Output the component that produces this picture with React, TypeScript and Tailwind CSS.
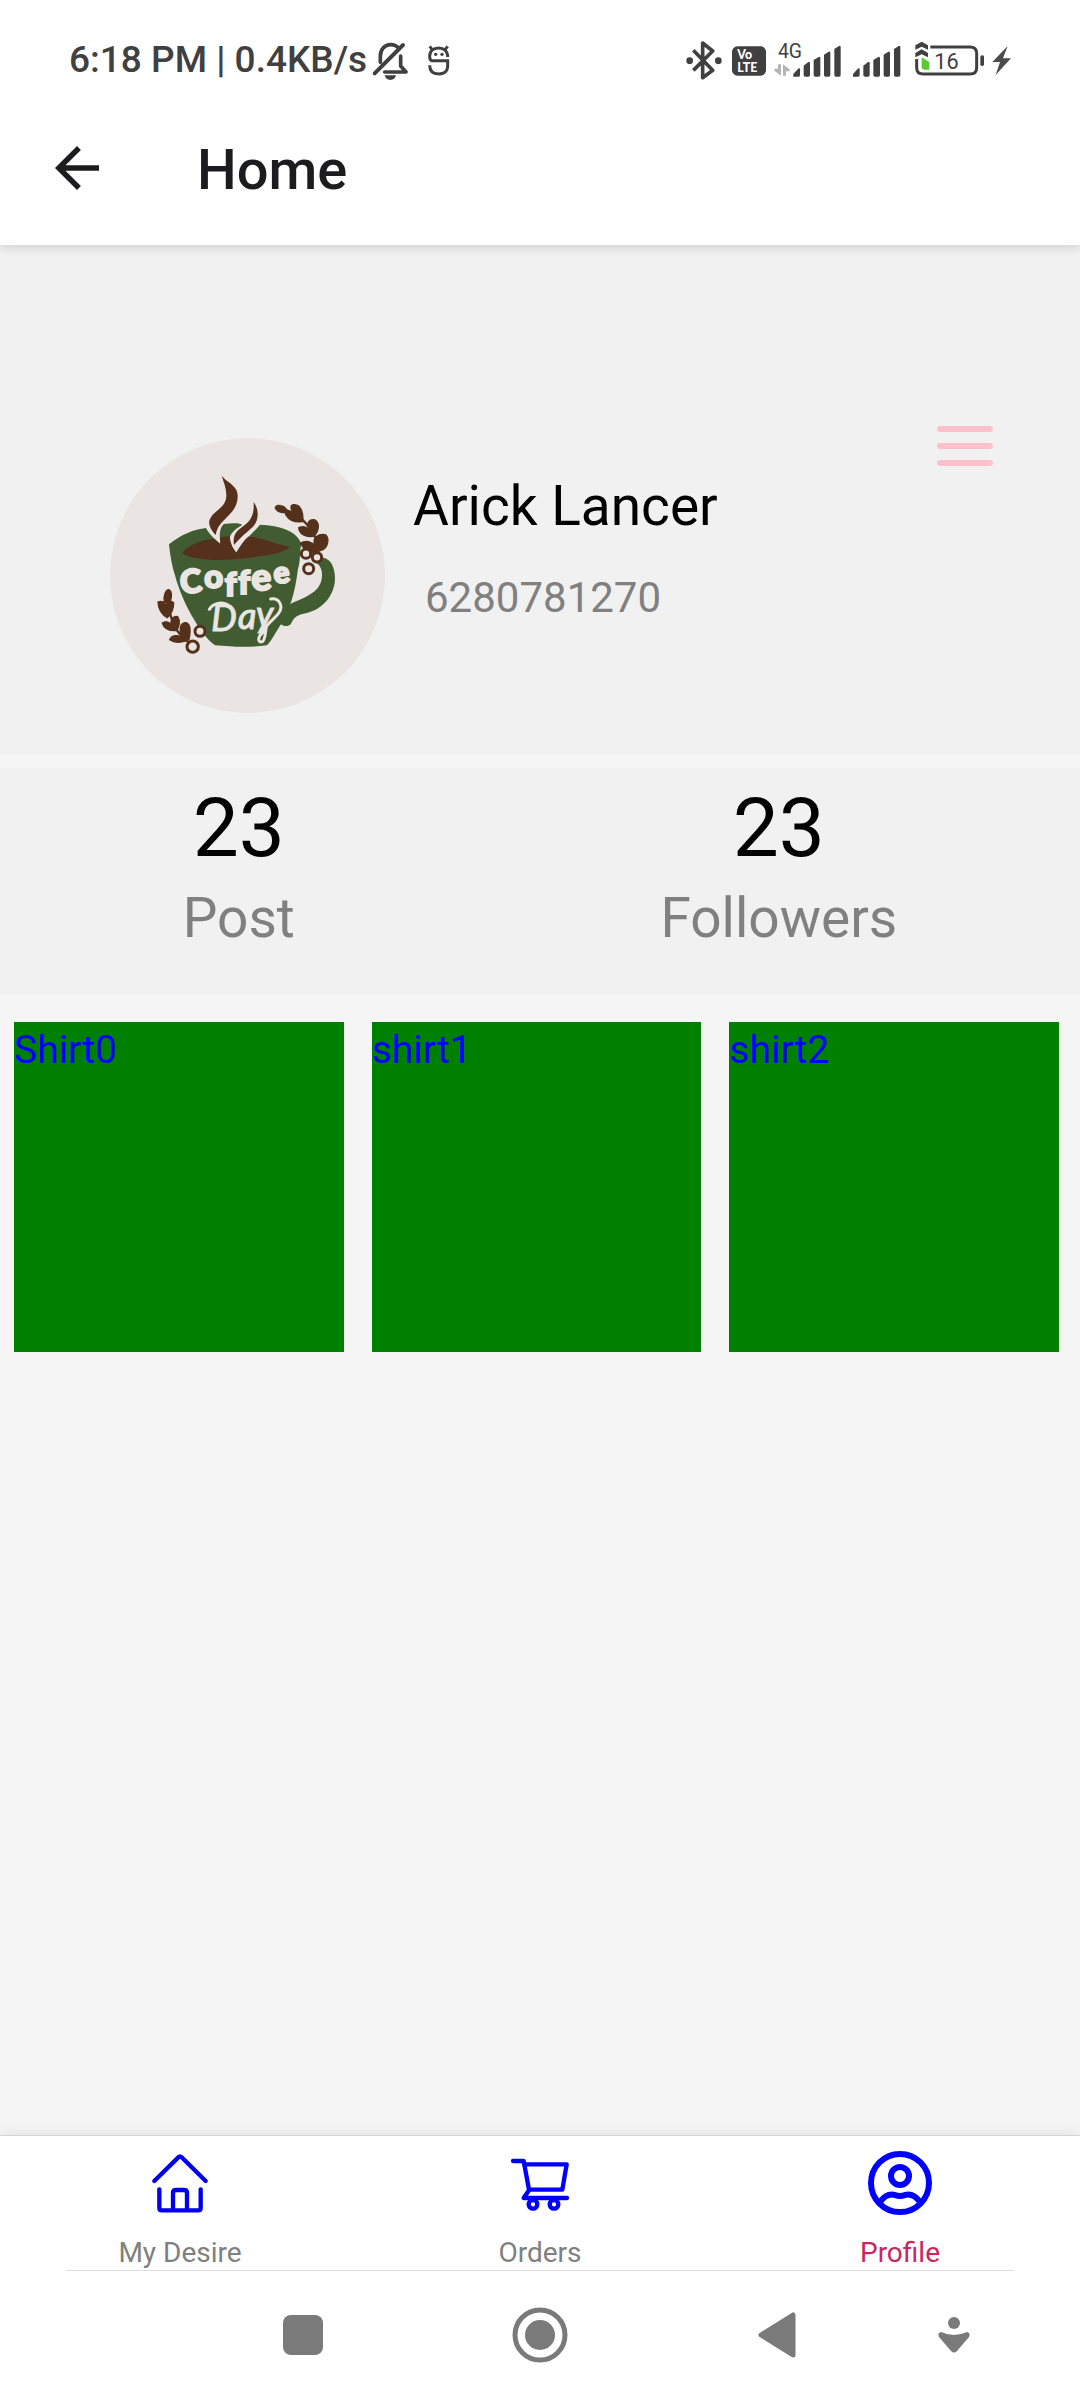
import React from "react";

const DARK = "#404040";

function MutedBell() {
  return (
    <svg viewBox="963 55 120 120" className="h-10 w-10" fill="none" stroke={DARK} strokeWidth="11" strokeLinecap="round" aria-hidden="true">
      <path d="M991 122V104C991 84 1003 69 1022 69C1032 69 1041 73 1047 81" />
      <path d="M1004 151H1068L1052 133V103" strokeLinejoin="round" />
      <path d="M974 155L1059 70" strokeWidth="12" />
      <path d="M1004 161H1038C1036 170 1030 175 1021 175C1012 175 1006 170 1004 161Z" fill={DARK} stroke="none" />
    </svg>
  );
}

function FaceIcon() {
  return (
    <svg viewBox="1135 55 72 120" className="h-10 w-6" fill="none" stroke={DARK} strokeWidth="9" aria-hidden="true">
      <path d="M1197 106C1197 88 1186 79 1170 79C1154 79 1143 88 1143 104C1143 112 1144 117 1150 117H1197V133C1197 149 1186 157 1170 157C1153 157 1143 149 1143 131" />
      <path d="M1151 84L1143 74M1189 84L1197 74" />
      <circle cx="1161" cy="98" r="5" fill={DARK} stroke="none" />
      <circle cx="1180" cy="98" r="5" fill={DARK} stroke="none" />
    </svg>
  );
}

function BluetoothIcon() {
  return (
    <svg viewBox="48 55 108 120" className="h-10 w-9" fill="none" stroke={DARK} strokeWidth="11" aria-hidden="true">
      <path d="M70 86L128 146L98 168V64L128 88L70 146" strokeLinejoin="round" />
      <circle cx="59" cy="117" r="10" fill={DARK} stroke="none" />
      <circle cx="145" cy="117" r="10" fill={DARK} stroke="none" />
    </svg>
  );
}

function VolteIcon() {
  return (
    <svg viewBox="186 55 102 120" className="h-10 w-[34px]" aria-hidden="true">
      <rect x="186" y="74" width="102" height="88" rx="16" fill={DARK} />
      <text fill="#fff" fontFamily="Lato, sans-serif" fontWeight="900" fontSize="37">
        <tspan x="202" y="113">Vo</tspan>
        <tspan x="202" y="151">LTE</tspan>
      </text>
    </svg>
  );
}

function Bars() {
  return (
    <g fill={DARK}>
      <path d="M0 165V157L16 140Q20 138 20 143V160Q20 165 15 165Z" />
      <path d="M31 160V132L45 121Q50 119 50 125V160Q50 165 45 165H36Q31 165 31 160Z" />
      <path d="M61 160V115L76 106Q81 104 81 110V160Q81 165 76 165H66Q61 165 61 160Z" />
      <path d="M92 160V99L106 90Q111 88 111 94V160Q111 165 106 165H97Q92 165 92 160Z" />
      <path d="M123 160V82L137 73Q142 71 142 77V160Q142 165 137 165H128Q123 165 123 160Z" />
    </g>
  );
}

function MobileSignal() {
  return (
    <svg viewBox="316 55 201 120" className="h-10 w-[67px]" aria-hidden="true">
      <text x="328" y="108" fontSize="58" fontFamily="Roboto, sans-serif" fill={DARK}>4G</text>
      <path d="M328 128H337V162L317 147V141H328ZM343 162V128L363 143V149H352V162Z" fill="#b5b5b5" />
      <g transform="translate(374 0)">
        <Bars />
      </g>
    </svg>
  );
}

function Signal() {
  return (
    <svg viewBox="0 55 144 120" className="h-10 w-12" aria-hidden="true">
      <Bars />
    </svg>
  );
}

function Battery() {
  return (
    <svg viewBox="737 55 207 120" className="h-10 w-[69px]" fill="none" aria-hidden="true">
      <path d="M783 76H902C915 76 922 83 922 95V138C922 150 915 157 902 157H762C748 157 742 150 742 138V112" stroke={DARK} strokeWidth="9" />
      <path d="M738 71L757 60L776 71V84L757 75L738 84ZM738 94L757 83L776 94V107L757 98L738 107Z" fill={DARK} />
      <path d="M757 107L780 121V144H766Q757 144 757 135Z" fill="#5cc832" />
      <rect x="933" y="101" width="11" height="32" rx="5" fill={DARK} />
      <text x="795" y="142" fontSize="65" fontFamily="Roboto, sans-serif" fill={DARK}>16</text>
    </svg>
  );
}

function Bolt() {
  return (
    <svg viewBox="966 55 57 120" className="h-10 w-[19px]" aria-hidden="true">
      <path d="M1013 73L967 121H990L977 160L1023 110H999Z" fill="#4c4c4c" />
    </svg>
  );
}

function CoffeeLogo() {
  const brown = "#55301b";
  const green = "#425c31";
  const paper = "#eae5e2";
  return (
    <svg viewBox="30 23 825 825" className="size-full" role="img" aria-label="Coffee Day">
      <circle cx="442.500" cy="435.500" r="412.500" fill={paper} />
      <path d="M207 342C245 312 282 297 318 293C330 316 350 330 361 341C358 315 358 292 372 281C400 277 430 279 425 285C400 300 385 315 390 335C396 352 405 360 409 367C425 335 462 306 480 283C540 285 590 302 604 340C598 368 602 390 594 415C588 460 582 490 571 521C620 498 668 485 666 430C665 408 652 396 636 392L670 382C692 386 705 410 705 443C705 490 672 540 610 550C585 556 580 565 572 582C564 590 550 588 543 582C528 604 516 630 501 645C450 652 400 650 345 645C322 628 300 600 285 572C255 525 234 470 225 435C214 400 210 370 207 342Z" fill={green} />
      <path d="M246 367C270 338 315 328 341 325L361 341V320L389 318C392 345 402 360 409 367C420 350 430 330 445 319C495 322 525 343 570 349C560 362 520 374 475 378C410 392 275 396 246 367Z" fill={brown} />
      <path d="M365 136C382 158 413 165 413 195C415 255 354 263 347 314C336 302 325 287 328 271C338 242 372 235 378 205C382 180 372 158 365 136ZM461 215C478 238 477 270 459 289C440 306 422 320 402 344C396 305 418 298 438 281C460 263 462 240 461 215Z" fill={brown} />
      <g fill={brown} stroke={brown}>
        <path d="M538 236C590 240 632 285 650 330M203 488C203 560 230 620 275 640" fill="none" strokeWidth="7" />
        <ellipse cx="543" cy="236" rx="19" ry="11" transform="rotate(20 543 236)" />
        <path strokeWidth="4" d="M555 248C570 235 580 250 582 252C568 232 572 222 583 223C604 222 611 252 608 274C580 276 565 270 555 248ZM596 292C610 286 621 290 627 296C619 276 628 267 642 268C661 275 658 304 640 318C618 322 598 312 596 292ZM602 338C618 328 635 335 644 346C636 322 655 310 675 313C690 322 684 354 665 359C645 372 615 370 602 338Z" />
        <path strokeWidth="4" d="M193 515C190 498 196 478 207 478C218 484 214 506 209 520ZM174 515C185 510 193 516 199 525C202 510 213 510 221 517C221 540 212 553 202 562C186 554 174 535 174 515ZM187 578C200 570 209 577 213 585C211 564 222 556 233 559C242 572 238 589 229 601C208 602 192 596 187 578ZM209 628C216 613 233 614 245 620C237 600 239 580 254 577C270 576 274 596 267 627C245 640 222 637 209 628Z" />
      </g>
      <g fill={paper} stroke={brown} strokeWidth="9">
        <circle cx="618" cy="370" r="14" />
        <circle cx="651" cy="381" r="14" />
        <circle cx="626" cy="415" r="15" />
        <circle cx="300" cy="603" r="15" />
        <circle cx="278" cy="649" r="17" />
      </g>
      <text fill={paper} stroke={paper} strokeWidth="6" fontFamily="Lato, sans-serif" fontWeight="900">
        <tspan fontSize="98" x="244" y="491" rotate="-6">C</tspan>
        <tspan fontSize="98" x="313" y="473">o</tspan>
        <tspan fontSize="98" x="374 415" y="497 491">ff</tspan>
        <tspan fontSize="112" x="457" y="482" rotate="-5">e</tspan>
        <tspan fontSize="90" x="524" y="461" rotate="-8">e</tspan>
      </text>
      <text x="334 414 468" y="603 597 590" fontSize="108" fontFamily="Lato, sans-serif" fontStyle="italic" fill={paper} stroke={paper} strokeWidth="3">Day</text>
      <path d="M328 537C340 518 365 514 382 523M512 506C538 502 552 528 535 550C520 570 500 578 490 605C470 622 474 638 487 634C497 628 495 607 499 590" fill="none" stroke={paper} strokeWidth="9" strokeLinecap="round" />
    </svg>
  );
}

function HomeIcon() {
  return (
    <svg viewBox="111 50 198 210" className="h-[70px] w-[66px]" fill="none" stroke="#0000ee" strokeWidth="13" strokeLinecap="round" strokeLinejoin="round" aria-hidden="true">
      <path d="M133 152L205 81Q210 76 215 81L287 152" />
      <path d="M148 177V233Q148 240 155 240H265Q272 240 272 233V177M189 240V188Q189 179 198 179H222Q231 179 231 188V240" />
    </svg>
  );
}

function CartIcon() {
  return (
    <svg viewBox="81 50 198 210" className="h-[70px] w-[66px]" fill="none" stroke="#0000ff" strokeWidth="13" strokeLinecap="round" strokeLinejoin="round" aria-hidden="true">
      <path d="M99 92H131L147 178H247L260 102H134M147 180L131 203H261" />
      <circle cx="159" cy="222" r="13" strokeWidth="13" />
      <circle cx="222" cy="222" r="13" strokeWidth="13" />
    </svg>
  );
}

function ProfileIcon() {
  return (
    <svg viewBox="0 0 66 70" className="h-[70px] w-[66px]" fill="none" stroke="#0000ff" strokeWidth="6" aria-hidden="true">
      <circle cx="33" cy="36" r="29" />
      <circle cx="33" cy="29" r="9" />
      <path d="M13 55C18 48 24 47 28 48Q33 50 38 48C42 47 48 48 53 55" />
    </svg>
  );
}

const stats = [
  { value: "23", label: "Post" },
  { value: "23", label: "Followers" },
];

const items = ["Shirt0", "shirt1", "shirt2"];

const tabs = [
  { label: "My Desire", icon: <HomeIcon />, active: false },
  { label: "Orders", icon: <CartIcon />, active: false },
  { label: "Profile", icon: <ProfileIcon />, active: true },
];

export default function App() {
  return (
    <div className="flex min-h-screen flex-col bg-[#f5f5f5] font-['Roboto',sans-serif] text-black">
      <div className="relative z-10 bg-white shadow-[0_2px_10px_rgba(0,0,0,0.15)]">
        <div className="flex items-start justify-between px-[69px] pt-10 pb-[15px]">
          <div className="flex items-center text-[#404040]">
            <span className="text-[37px] leading-10 font-medium whitespace-nowrap">6:18 PM | 0.4KB/s</span>
            <span className="ml-1 flex gap-4">
              <MutedBell />
              <FaceIcon />
            </span>
          </div>
          <div className="flex items-center">
            <BluetoothIcon />
            <span className="ml-2.5 flex gap-2">
              <VolteIcon />
              <MobileSignal />
            </span>
            <span className="ml-3 flex gap-3.5">
              <Signal />
              <Battery />
            </span>
            <span className="ml-2 flex">
              <Bolt />
            </span>
          </div>
        </div>
        <header className="flex items-center pt-10 pb-11 pl-11 text-[#1c1c1e]">
          <button type="button" aria-label="Back">
            <svg viewBox="0 0 24 24" className="size-[66px]" fill="currentColor" aria-hidden="true">
              <path d="M20 11H7.830l5.590-5.590L12 4l-8 8 8 8 1.410-1.410L7.830 13H20v-2z" />
            </svg>
          </button>
          <h1 className="ml-[87px] pt-1 text-[56px] leading-[62px] font-medium">Home</h1>
        </header>
      </div>

      <main className="flex-1">
        <section className="flex items-start bg-[#f1f1f1] pt-[181px] pr-[87px] pb-[41px] pl-[110px]">
          <div className="mt-3 size-[275px] shrink-0">
            <CoffeeLogo />
          </div>
          <div className="mt-12 ml-7">
            <h2 className="text-[55px] leading-16">Arick Lancer</h2>
            <p className="mt-9 ml-3 text-[42px] leading-12 text-[#808080]">6280781270</p>
          </div>
          <button type="button" aria-label="Menu" className="ml-auto flex w-14 flex-col gap-[11px]">
            <span className="h-[6px] rounded-full bg-[#ffc0cb]" />
            <span className="h-[6px] rounded-full bg-[#ffc0cb]" />
            <span className="h-[6px] rounded-full bg-[#ffc0cb]" />
          </button>
        </section>

        <section className="mt-3.5 flex justify-around bg-[#f1f1f1] pt-3 pb-11 text-center">
          {stats.map((s) => (
            <div key={s.label}>
              <p className="text-[82px] leading-24">{s.value}</p>
              <p className="mt-2.5 text-[55px] leading-16 text-[#808080]">{s.label}</p>
            </div>
          ))}
        </section>

        <section className="mt-7 grid grid-cols-3 gap-7 pr-[21px] pl-3.5">
          {items.map((name) => (
            <div key={name} className="aspect-square bg-[#008000] pt-1.5 text-[39px] leading-11 text-[#0000ff]">
              {name}
            </div>
          ))}
        </section>
      </main>

      <footer className="border-t border-[#d4d4d4] bg-white shadow-[0_0_14px_rgba(0,0,0,0.10)]">
        <nav className="grid grid-cols-3 pt-[11px]">
          {tabs.map((t) => (
            <a key={t.label} href="#" className="flex flex-col items-center gap-5">
              {t.icon}
              <span className={t.active ? "text-[28px] leading-8 text-[#c9285f]" : "text-[28px] leading-8 text-[#808080]"}>
                {t.label}
              </span>
            </a>
          ))}
        </nav>
        <div className="mx-[66px] mt-px h-px bg-[#dedede]" />
        <div className="grid grid-cols-[184fr_237fr_237fr_237fr_117fr_68fr] items-center justify-items-center pt-[34px] pb-[35px] text-[#7a7a7a]">
          <button type="button" aria-label="Recent apps" className="col-start-2 size-10 rounded-lg bg-[#7a7a7a]" />
          <button type="button" aria-label="Home screen">
            <svg viewBox="0 0 60 60" className="size-[60px]" aria-hidden="true">
              <circle cx="30" cy="30" r="25" fill="none" stroke="currentColor" strokeWidth="5" />
              <circle cx="30" cy="30" r="15" fill="currentColor" />
            </svg>
          </button>
          <button type="button" aria-label="Go back">
            <svg viewBox="0 0 38 48" className="h-12 w-[38px]" aria-hidden="true">
              <path d="M3 24L35 4V44Z" fill="currentColor" stroke="currentColor" strokeWidth="5" strokeLinejoin="round" />
            </svg>
          </button>
          <button type="button" aria-label="Accessibility">
            <svg viewBox="0 0 32 36" className="h-9 w-8" fill="currentColor" aria-hidden="true">
              <circle cx="16" cy="6" r="6" />
              <path d="M3 15Q10 18 16 18Q22 18 29 15Q33 16 31 20L19 34Q16 37 13 34L1 20Q-1 16 3 15Z" />
            </svg>
          </button>
        </div>
      </footer>
    </div>
  );
}
